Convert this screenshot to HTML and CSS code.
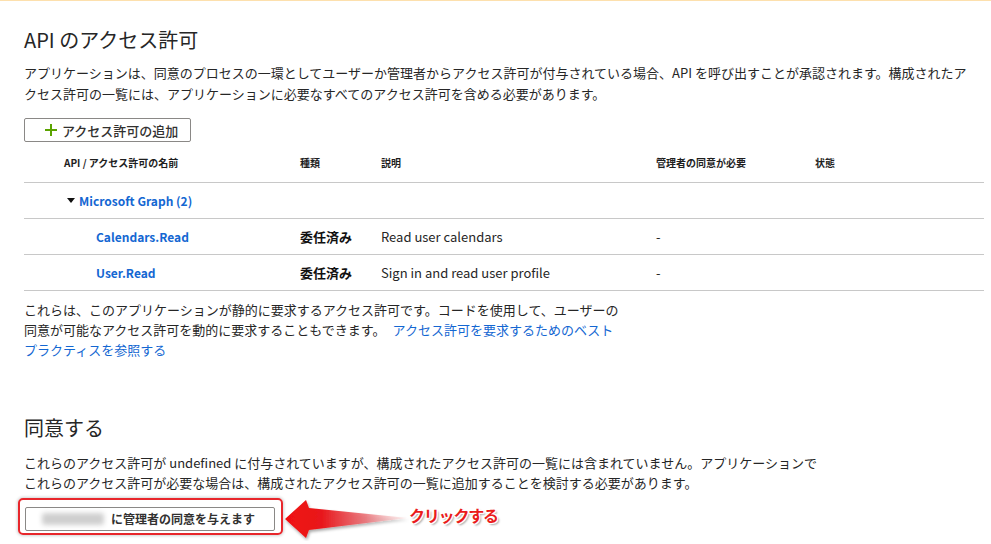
FILE: index.html
```html
<!DOCTYPE html>
<html lang="ja">
<head>
<meta charset="utf-8">
<title>API のアクセス許可</title>
<link rel="stylesheet" href="styles.css">
</head>
<body>
<div class="topline"></div>
<main class="page">
  <h1 class="title">API のアクセス許可</h1>
  <p class="intro">アプリケーションは、同意のプロセスの一環としてユーザーか管理者からアクセス許可が付与されている場合、API を呼び出すことが承認されます。構成されたアクセス許可の一覧には、アプリケーションに必要なすべてのアクセス許可を含める必要があります。</p>
  <button class="add-btn" type="button"><svg class="plus" width="12" height="12" viewBox="0 0 12 12"><path d="M6 0 V12 M0 6 H12" stroke="#5ba300" stroke-width="2"/></svg>アクセス許可の追加</button>

  <div class="perm-table">
    <div class="row head">
      <div class="cell name">API / アクセス許可の名前</div>
      <div class="cell">種類</div>
      <div class="cell">説明</div>
      <div class="cell">管理者の同意が必要</div>
      <div class="cell">状態</div>
    </div>
    <div class="row">
      <div class="cell name group"><span class="caret"></span><a class="link strong">Microsoft Graph (2)</a></div>
      <div class="cell"></div>
      <div class="cell"></div>
      <div class="cell"></div>
      <div class="cell"></div>
    </div>
    <div class="row">
      <div class="cell name perm"><a class="link strong">Calendars.Read</a></div>
      <div class="cell type">委任済み</div>
      <div class="cell">Read user calendars</div>
      <div class="cell">-</div>
      <div class="cell"></div>
    </div>
    <div class="row">
      <div class="cell name perm"><a class="link strong">User.Read</a></div>
      <div class="cell type">委任済み</div>
      <div class="cell">Sign in and read user profile</div>
      <div class="cell">-</div>
      <div class="cell"></div>
    </div>
  </div>

  <p class="note">これらは、このアプリケーションが静的に要求するアクセス許可です。コードを使用して、ユーザーの同意が可能なアクセス許可を動的に要求することもできます。<a class="link note-link">アクセス許可を要求するためのベスト プラクティスを参照する</a></p>

  <h2 class="title consent-title">同意する</h2>
  <p class="consent-text">これらのアクセス許可が undefined に付与されていますが、構成されたアクセス許可の一覧には含まれていません。アプリケーションでこれらのアクセス許可が必要な場合は、構成されたアクセス許可の一覧に追加することを検討する必要があります。</p>

  <div class="annot">
    <div class="highlight">
      <button class="grant-btn" type="button"><span class="blur"></span>に管理者の同意を与えます</button>
    </div>
    <svg class="arrow" width="125" height="44" viewBox="0 0 125 44">
      <defs>
        <linearGradient id="ag" x1="0" y1="0" x2="1" y2="0">
          <stop offset="0" stop-color="#f01010"/>
          <stop offset="0.3" stop-color="#e8171b"/>
          <stop offset="0.65" stop-color="#ea6a70" stop-opacity="0.85"/>
          <stop offset="1" stop-color="#fbe0e0" stop-opacity="0.4"/>
        </linearGradient>
        <filter id="sh" x="-10%" y="-20%" width="130%" height="160%">
          <feDropShadow dx="1" dy="2" stdDeviation="1.5" flood-color="#000" flood-opacity="0.35"/>
        </filter>
      </defs>
      <path d="M1 22 L22 3 L25 11 L124 21 L25 33 L22 41 Z" fill="url(#ag)" filter="url(#sh)"/>
    </svg>
    <span class="callout">クリックする</span>
  </div>
</main>
</body>
</html>
```
FILE: styles.css
```css
html, body {
  margin: 0;
  padding: 0;
  background: #ffffff;
}
body {
  font-family: "Noto Sans CJK JP", "Noto Sans", sans-serif;
  color: #262626;
  font-size: 13px;
  overflow: hidden;
}
.topline {
  height: 1px;
  background: #fde0ad;
}
.page {
  padding: 0 7px 0 24px;
}
.title {
  margin: 25px 0 0 0;
  font-size: 20px;
  font-weight: 400;
  line-height: 28px;
  color: #262626;
}
.intro {
  margin: 8px 0 0 0;
  width: 951px;
  line-height: 21px;
}
.add-btn {
  margin-top: 14px;
  display: flex;
  align-items: center;
  width: 167px;
  height: 24px;
  padding: 0 0 0 20px;
  border: 1px solid #8a8886;
  border-radius: 2px;
  background: #fff;
  font-family: inherit;
  font-size: 13px;
  font-weight: 500;
  color: #323130;
  line-height: 1;
}
.plus {
  margin-right: 5px;
  flex: none;
}
.perm-table {
  width: 960px;
}
.row {
  display: grid;
  grid-template-columns: 276px 81px 275px 159px 1fr;
  height: 35px;
  border-bottom: 1px solid #c8c8c8;
  align-items: center;
}
.row.head {
  height: 40px;
  font-size: 10px;
  font-weight: 700;
  color: #1e1e1e;
}
.cell {
  white-space: nowrap;
}
.name {
  padding-left: 40px;
}
.group {
  display: flex;
  align-items: center;
}
.caret {
  width: 0;
  height: 0;
  margin-left: 3px;
  margin-right: 4px;
  border-left: 4.5px solid transparent;
  border-right: 4.5px solid transparent;
  border-top: 5px solid #111;
}
.perm {
  padding-left: 72px;
}
.link {
  color: #1467d2;
  text-decoration: none;
}
.strong {
  font-size: 12px;
  font-weight: 600;
}
.type {
  font-weight: 700;
  color: #111;
}
.note {
  margin: 9px 0 0 0;
  width: 600px;
  line-height: 20px;
}
.note-link {
  margin-left: 7px;
}
.consent-title {
  margin-top: 54px;
}
.consent-text {
  margin: 11px 0 0 0;
  width: 798px;
  line-height: 20px;
}
.annot {
  margin-top: 5px;
  margin-left: -6px;
  display: flex;
  align-items: flex-start;
}
.highlight {
  border: 2px solid #e8262b;
  border-radius: 5px;
  box-shadow: 0 0 3px 1px rgba(0, 0, 0, 0.18);
  padding: 7px 0 0 5px;
  box-sizing: border-box;
  width: 265px;
  height: 37px;
}
.grant-btn {
  display: flex;
  align-items: center;
  width: 250px;
  height: 24px;
  padding: 0 0 0 16px;
  border: 1px solid #8a8886;
  border-radius: 2px;
  background: #fff;
  font-family: inherit;
  font-size: 12px;
  font-weight: 600;
  color: #323130;
  line-height: 1;
}
.blur {
  display: block;
  width: 62px;
  height: 12px;
  margin-right: 7px;
  background: #cfcfcf;
  border-radius: 3px;
  filter: blur(2.5px);
}
.arrow {
  margin-top: -1px;
  margin-left: 1px;
  flex: none;
}
.callout {
  margin-left: 0;
  margin-top: 6px;
  font-size: 16px;
  font-weight: 700;
  letter-spacing: -1.2px;
  color: #ea1c1c;
  line-height: 22px;
  text-shadow:
    -1px -1px 0 #fff, 1px -1px 0 #fff, -1px 1px 0 #fff, 1px 1px 0 #fff,
    2px 2px 2px rgba(0, 0, 0, 0.35);
}
```
